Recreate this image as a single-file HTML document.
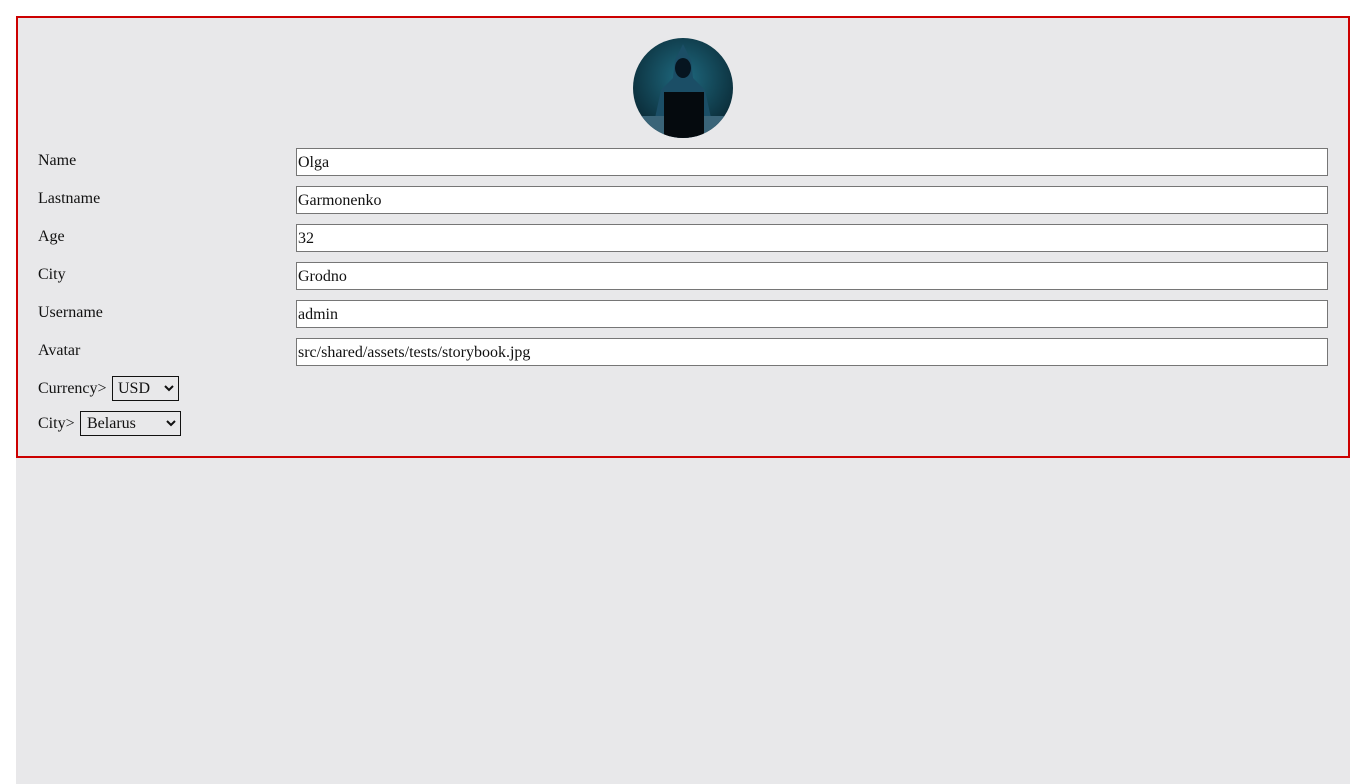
<!DOCTYPE html>
<html><head><meta charset="utf-8"><style>
html,body{margin:0;padding:0;background:#fff;width:1350px;height:784px;overflow:hidden;font-family:"Liberation Serif",serif;font-size:16px;color:#111}
.page{position:absolute;left:16px;top:16px;width:1334px;height:768px;background:#e8e8ea}
.card{position:absolute;left:16px;top:16px;width:1330px;height:438px;border:2px solid #cc0000;background:#e8e8ea}
.lbl{position:absolute;left:38px}
.inp{position:absolute;left:296px;width:1029px;height:26px;border:1px solid #767676;background:#fff;box-sizing:content-box;line-height:28px;padding-left:1px;font-size:16px}
.sel{position:absolute;height:23px;border:1px solid #111;background:#e8e8ea;box-sizing:border-box;line-height:23px;font-size:16px}
.sel svg{position:absolute;right:4px;top:7px}
</style></head><body>
<div class="page"></div>
<div class="card"></div>
<svg style="position:absolute;left:633px;top:38px" width="100" height="100" viewBox="0 0 100 100">
<defs><clipPath id="c"><circle cx="50" cy="50" r="50"/></clipPath>
<radialGradient id="g" cx="50%" cy="40%" r="60%"><stop offset="0" stop-color="#1f6a80"/><stop offset="1" stop-color="#0a2a36"/></radialGradient></defs>
<g clip-path="url(#c)">
<rect width="100" height="100" fill="url(#g)"/>
<path d="M50 6 L42 22 L40 40 L28 52 L22 80 L78 80 L72 52 L60 40 L58 22 Z" fill="#1b4e66"/>
<ellipse cx="50" cy="30" rx="8" ry="10" fill="#061520"/>
<rect x="0" y="78" width="100" height="22" fill="#3a6478"/>
<rect x="31" y="54" width="40" height="46" fill="#050a0e"/>
</g></svg>
<div class="lbl" style="top:152px">Name</div>
<div class="inp" style="top:148px">Olga</div>
<div class="lbl" style="top:190px">Lastname</div>
<div class="inp" style="top:186px">Garmonenko</div>
<div class="lbl" style="top:228px">Age</div>
<div class="inp" style="top:224px">32</div>
<div class="lbl" style="top:266px">City</div>
<div class="inp" style="top:262px">Grodno</div>
<div class="lbl" style="top:304px">Username</div>
<div class="inp" style="top:300px">admin</div>
<div class="lbl" style="top:342px">Avatar</div>
<div class="inp" style="top:338px">src/shared/assets/tests/storybook.jpg</div>
<div class="lbl" style="top:380px">Currency&gt;</div>
<div class="sel" style="left:112px;top:376px;width:67px;height:25px;padding-left:5px">USD<svg width="10" height="8" viewBox="0 0 10 8"><path d="M1 2 L5 6 L9 2" stroke="#111" stroke-width="2" fill="none"/></svg></div>
<div class="lbl" style="top:415px">City&gt;</div>
<div class="sel" style="left:80px;top:411px;width:101px;height:25px;padding-left:6px">Belarus<svg width="10" height="8" viewBox="0 0 10 8"><path d="M1 2 L5 6 L9 2" stroke="#111" stroke-width="2" fill="none"/></svg></div>
</body></html>
